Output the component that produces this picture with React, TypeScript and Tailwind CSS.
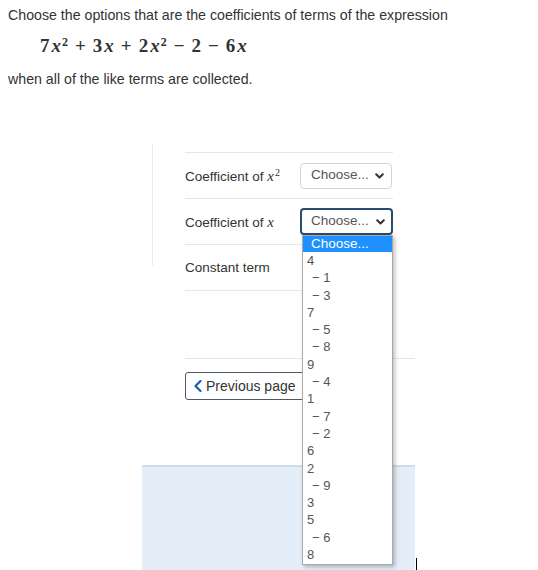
import React from "react";

const M = ({ children }: { children: React.ReactNode }) => (
  <span className="italic text-[15px]" style={{ fontFamily: '"Liberation Serif", "DejaVu Serif", serif' }}>{children}</span>
);

const Chevron = () => (
  <svg width="9" height="6" viewBox="0 0 9 6" className="ml-auto">
    <polyline points="1.2,1.2 4.5,4.5 7.8,1.2" fill="none" stroke="#333" strokeWidth="2" strokeLinecap="round" strokeLinejoin="round" />
  </svg>
);

const options = ["4", "-1", "-3", "7", "-5", "-8", "9", "-4", "1", "-7", "-2", "6", "2", "-9", "3", "5", "-6", "8"];

export default function App() {
  return (
    <div className="relative w-[538px] h-[570px] overflow-hidden bg-white text-[#333]" style={{ fontFamily: '"Liberation Sans", Arial, sans-serif' }}>
      <p className="pl-[8px] pt-[5px] text-[14.2px] leading-[20px]">Choose the options that are the coefficients of terms of the expression</p>
      <div className="pl-[40px] pt-[9px] h-[40px] text-[19px] leading-[24px] font-bold text-[#333]" style={{ fontFamily: '"Liberation Serif", "DejaVu Serif", serif' }}>
        7<span className="italic ml-[2px]">x</span><sup className="text-[12px] ml-[1px]">2</sup><span className="mx-[7px]">+</span>3<span className="italic ml-[2px]">x</span><span className="mx-[7px]">+</span>2<span className="italic ml-[2px]">x</span><sup className="text-[12px] ml-[1px]">2</sup><span className="mx-[7px]">−</span>2<span className="mx-[7px]">−</span>6<span className="italic ml-[2px]">x</span>
      </div>
      <p className="pl-[8px] pt-[4px] text-[14.2px] leading-[20px]">when all of the like terms are collected.</p>

      <div className="flex mt-[55px] ml-[152px]">
        <div className="w-px h-[122px] bg-[#e3ebf3]" />
        <div className="ml-[32px] mt-[8px] flex flex-col">
          <div className="w-[208px] border-t border-[#dde8f2]">
            <div className="h-[46px] border-b border-[#dde8f2] flex items-center text-[13.5px]">
              <span className="w-[115px] pt-[2px]">Coefficient of <M>x</M><sup className="text-[10px] ml-[1px]" style={{ fontFamily: '"Liberation Serif", serif' }}>2</sup></span>
              <div className="w-[92px] h-[26px] border border-[#d4d4d4] rounded-[4px] flex items-center pl-[10px] pr-[7px] text-[13.5px] text-[#555]">
                Choose...<Chevron />
              </div>
            </div>
            <div className="h-[46px] border-b border-[#dde8f2] flex items-center text-[13.5px]">
              <span className="w-[115px] pt-[2px]">Coefficient of <M>x</M></span>
              <div className="relative">
                <div className="w-[93px] h-[27px] border-2 border-[#2c4a6c] rounded-[4px] flex items-center pl-[9px] pr-[6px] text-[13.5px] text-[#555]">
                  Choose...<Chevron />
                </div>
                <div className="absolute left-[2px] top-[27px] w-[91px] bg-white border border-[#a9a9a9] shadow-[2px_2px_4px_rgba(0,0,0,0.25)] z-10 text-[13px] leading-[17.3px] text-[#555]">
                  <div className="h-[16px] leading-[16px] bg-[#1e90ff] text-white pl-[8px] text-[13.5px]">Choose...</div>
                  <div className="pb-[1px]">
                    {options.map((o) => (
                      <div key={o} className={o.startsWith("-") ? "pl-[9px]" : "pl-[4px]"}>
                        {o.startsWith("-") ? `− ${o.slice(1)}` : o}
                      </div>
                    ))}
                  </div>
                </div>
              </div>
            </div>
            <div className="h-[46px] border-b border-[#dde8f2] flex items-center text-[13.5px]">
              <span className="w-[117px] pt-[2px]">Constant term</span>
              <div className="w-[90px] h-[26px] border border-[#d4d4d4] rounded-[4px]" />
            </div>
          </div>
          <div className="mt-[67px] w-[230px] border-t border-[#dde8f2]" />
          <div className="mt-[13px] w-[140px] h-[28px] border border-[#4a5a6c] rounded-[3px] flex items-center pl-[8px] gap-[4px] text-[14px]">
            <svg width="8" height="12" viewBox="0 0 8 12">
              <polyline points="6.5,1 1.5,6 6.5,11" fill="none" stroke="#1a5fb4" strokeWidth="2.2" strokeLinecap="round" strokeLinejoin="round" />
            </svg>
            Previous page
          </div>
        </div>
      </div>

      <div className="mt-[65px] ml-[142px] w-[273px] h-[110px] bg-[#e4eef8] border-t-2 border-[#cfdbe7]" />
      <div className="absolute left-[416px] top-[558px] w-px h-[12px] bg-black" />
    </div>
  );
}
